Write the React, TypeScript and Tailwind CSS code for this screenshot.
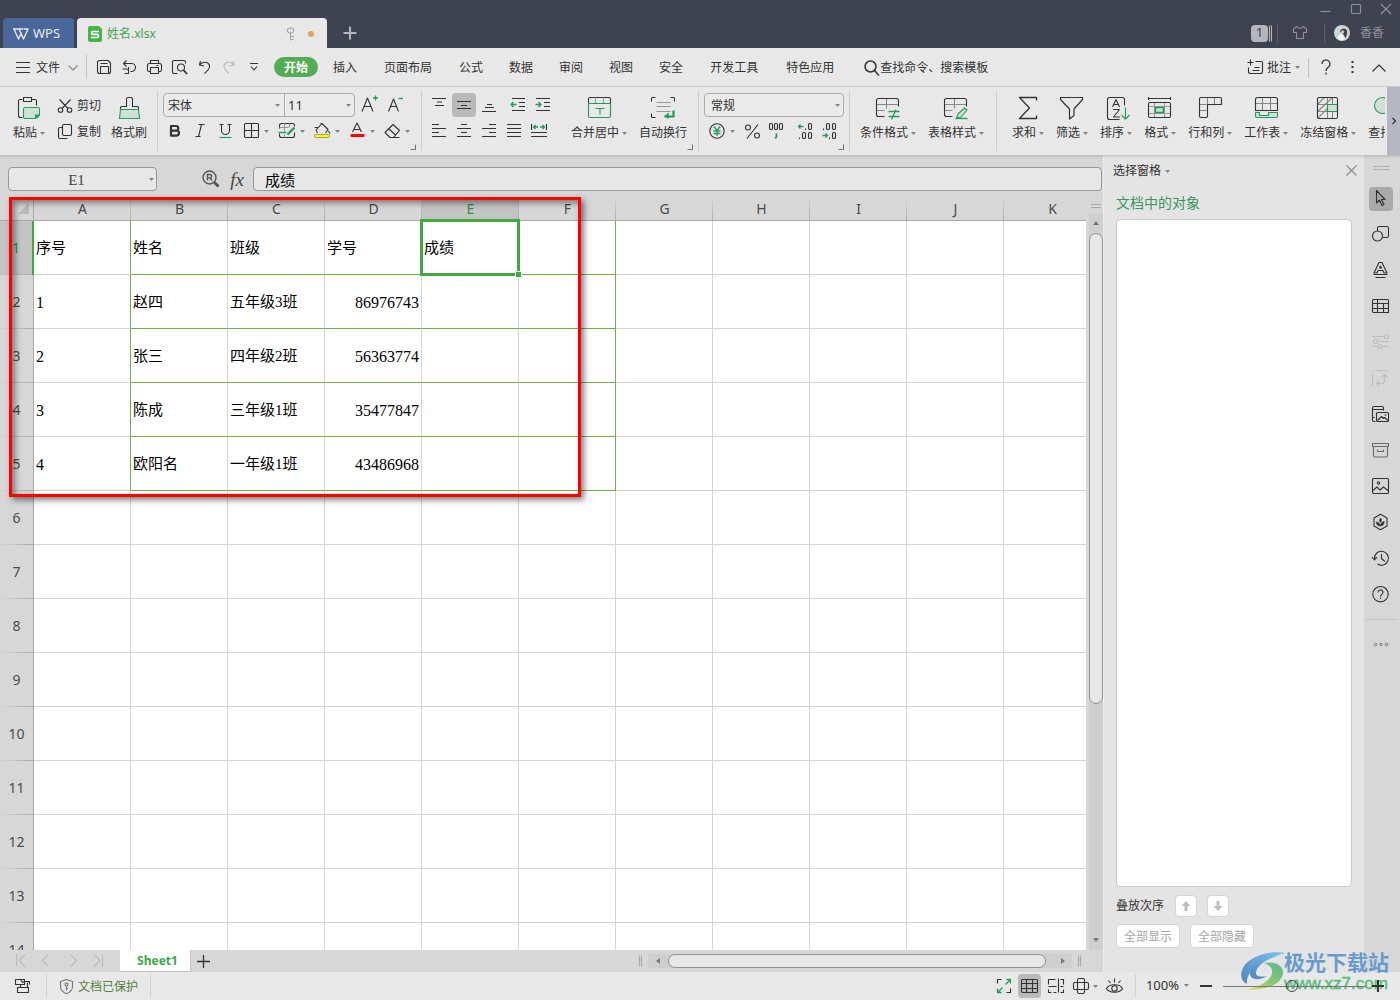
import React from "react";

type Kids = { children?: React.ReactNode };

function Ic({ w, h, sw = 1.1, className = "", children }: Kids & { w: number; h: number; sw?: number; className?: string }) {
  return (
    <svg width={w} height={h} viewBox={`0.5 0.5 ${w} ${h}`} fill="none" stroke="currentColor" strokeWidth={sw} strokeLinejoin="round" className={"shrink-0 overflow-visible " + className} aria-hidden="true">
      {children}
    </svg>
  );
}

const G = "#279b5b";
const LG = "#cfe0d6";

function Caret({ className = "" }: { className?: string }) {
  return (
    <svg width="5" height="3" viewBox="0 0 5 3" className={"shrink-0 " + className} aria-hidden="true">
      <path d="M0 0h5L2.500 3z" fill="#858585" />
    </svg>
  );
}

function Corner() {
  return (
    <Ic w={6} h={6} className="absolute bottom-1 right-1 text-[#777]">
      <path d="M5 0v5H0" />
    </Ic>
  );
}

function Big({ label, icon, caret = true }: { label: string; icon: React.ReactNode; caret?: boolean }) {
  return (
    <button className="flex shrink-0 flex-col items-center gap-1 pt-[9px]">
      <span className="flex h-6 items-center justify-center">{icon}</span>
      <span className="flex h-[18px] items-center gap-[3px] whitespace-nowrap">
        {label}
        {caret && <Caret />}
      </span>
    </button>
  );
}

function Tool({ label, active, children }: Kids & { label: string; active?: boolean }) {
  return (
    <button aria-label={label} className={"flex h-6 w-6 shrink-0 items-center justify-center rounded " + (active ? "bg-[#bababa]" : "")}>
      {children}
    </button>
  );
}

function Drop({ label, children }: Kids & { label: string }) {
  return (
    <button aria-label={label} className="flex h-6 w-[35px] shrink-0 items-center gap-1">
      {children}
      <Caret />
    </button>
  );
}

/* ---------- title bar ---------- */
function TitleBar() {
  return (
    <header className="flex h-12 shrink-0 items-end bg-[#3f424f] pl-[3px] text-[#8f929d]">
      <button className="flex h-[30px] w-[71px] items-center gap-1 rounded-t bg-[#4a6799] pl-[10px] pt-[2px] text-[13px] text-[#e6e9f0]">
        <Ic w={16} h={12} sw={1.400}>
          <path d="M.5 1.500h5M1.500 1.500l4.500 10L9 5M4.500 1.500h6M6.500 1.500l4.500 10L15.500 1.500H11" />
        </Ic>
        WPS
      </button>
      <div className="ml-[3px] flex h-[30px] w-[250px] items-center rounded-t bg-[#e8e8e8] pl-[11px] pr-[13px] pt-[2px] text-xs text-[#3fa64a]">
        <svg width="14" height="16" viewBox="0 0 14 16" fill="none" className="shrink-0" aria-hidden="true">
          <path d="M2 0h9l3 3v11a2 2 0 0 1-2 2H2a2 2 0 0 1-2-2V2a2 2 0 0 1 2-2z" fill="#45b549" />
          <path d="M11 5.500H5a1.400 1.400 0 0 0 0 2.900h4a1.500 1.500 0 0 1 0 3.100H3" stroke="#fff" strokeWidth="1.600" />
        </svg>
        <span className="ml-[5px] flex-1">姓名.xlsx</span>
        <Ic w={9} h={13} className="text-[#a3a3a3]">
          <ellipse cx="4" cy="3" rx="3.200" ry="2.500" />
          <path d="M4 5.500V13M4 9h3.500M4 12h3.500" />
        </Ic>
        <span className="ml-[12px] h-[6px] w-[6px] rounded-full bg-[#e8a05a]" />
      </div>
      <button aria-label="新建标签" className="ml-[17px] flex h-[30px] w-3 items-center text-[#b4b6bd]">
        <Ic w={12} h={12} sw={2}><path d="M6.500 0v13M0 6.500h13" /></Ic>
      </button>
      <div className="ml-auto flex h-12 flex-col items-end">
        <div className="flex h-[18px] items-center gap-5 pr-[9px]">
          <button aria-label="最小化"><Ic w={10} h={10}><path d="M0 8h10" /></Ic></button>
          <button aria-label="最大化"><Ic w={10} h={10}><rect x="1" y="1" width="9" height="9" rx="1" /></Ic></button>
          <button aria-label="关闭"><Ic w={10} h={10}><path d="M.5.500l10 10M10.500.500l-10 10" /></Ic></button>
        </div>
        <div className="flex h-[30px] items-center pr-4 text-xs">
          <span className="flex h-[17px] w-[17px] items-center justify-center rounded-sm bg-[#b4b6bc] text-[13px] text-[#2f4a70]">1</span>
          <Ic w={5} h={17}><path d="M2 1v16M4 1v16" stroke="#b4b6bc" /></Ic>
          <span className="ml-1 h-5 w-px bg-[#5b5e6a]" />
          <Ic w={14} h={14} className="ml-[15px]">
            <path d="M4.500 1L1 3.200V7h3v6h7V7h3V3.200L10.500 1C9 3.500 6 3.500 4.500 1z" />
          </Ic>
          <span className="ml-[17px] h-5 w-px bg-[#5b5e6a]" />
          <svg width="16" height="16" viewBox="0 0 16 16" className="ml-[9px]" role="img" aria-label="头像">
            <circle cx="8" cy="8" r="8" fill="#c9d6db" />
            <path d="M6 6.500c1-3.500 6-4.500 7-.5.500 3-.500 5-1.500 7L9.500 9.500z" fill="#4a3d40" />
            <path d="M7 7c.500-1.800 3-2 3.200-.5s-1.200 2.500-2.700 2z" fill="#e8c6ba" />
            <path d="M3 13c1-3 4-4.500 6-3.500l1 5C7.500 16 5 15 3 13z" fill="#f2f5f6" />
          </svg>
          <span className="ml-[10px]">香香</span>
        </div>
      </div>
    </header>
  );
}

/* ---------- menu row ---------- */
const tabs: [string, string][] = [
  ["插入", "px-[13px]"], ["页面布局", "px-[14px]"], ["公式", "px-[13px]"], ["数据", "px-[13px]"], ["审阅", "px-[13px]"],
  ["视图", "px-[13px]"], ["安全", "px-[13px]"], ["开发工具", "px-[14px]"], ["特色应用", "px-[14px]"],
];

function MenuRow() {
  return (
    <nav className="flex h-[39px] shrink-0 items-center border-b border-[#d2d2d2] bg-[#e8e8e8]">
      <button className="ml-4 flex items-center pt-px">
        <Ic w={14} h={11}><path d="M.5 1h14M.5 6h14M.5 11h14" /></Ic>
        <span className="ml-[6px]">文件</span>
        <Ic w={10} h={6} className="ml-2 text-[#888]"><path d="M1 1l4.500 4.500L10 1" /></Ic>
      </button>
      <span className="ml-2 h-6 w-px bg-[#c3c3c3]" />
      <div className="ml-[10px] flex items-center gap-[10px]">
        <button aria-label="保存"><Ic w={15} h={15}><path d="M3 1h8.500L14 3.500V12a2 2 0 0 1-2 2H3a2 2 0 0 1-2-2V3a2 2 0 0 1 2-2zM4 14V7h8v7M4 4h7" /></Ic></button>
        <button aria-label="输出"><Ic w={15} h={15}><path d="M2 4h8a4 4 0 0 1 0 8H9M5 1L2 4l3 3M1 9.500h4a2 2 0 0 1 2 2V14H3M7 12V7.500" /></Ic></button>
        <button aria-label="打印"><Ic w={15} h={15}><path d="M4 4V1h8v3M4 12H2.500A1.500 1.500 0 0 1 1 10.500V6a2 2 0 0 1 2-2h10a2 2 0 0 1 2 2v4.500a1.500 1.500 0 0 1-1.500 1.500H12M4 8h8v6H4zM10 6h2" /></Ic></button>
        <button aria-label="打印预览"><Ic w={16} h={15}><path d="M6 14H2.500A1.500 1.500 0 0 1 1 12.500v-10A1.500 1.500 0 0 1 2.500 1h10A1.500 1.500 0 0 1 14 2.500V4" /><circle cx="9.500" cy="8" r="3.500" /><path d="M12 10.500l3.500 4" strokeWidth="1.800" /></Ic></button>
        <button aria-label="撤销"><Ic w={14} h={15}><path d="M3 1.500L2 5.500l4.500 1M2 5.500C5 1.500 11 2 12 6c.8 3.500-2.500 5.500-5 8" /></Ic></button>
        <button aria-label="恢复" className="text-[#b9b9b9]"><Ic w={14} h={15}><path d="M11.500 1.500l1 4-4.500 1M12.500 5.500C9.500 1.500 3.500 2 2.500 6c-.8 3.500 2.500 5.500 5 8" /></Ic></button>
        <button aria-label="更多" className="ml-1"><Ic w={8} h={8}><path d="M.5 1h8M1.500 4l3 3.500 3-3.500" /></Ic></button>
      </div>
      <button className="ml-4 flex h-5 w-11 shrink-0 items-center justify-center rounded-full bg-[#53ad57] pt-px font-bold text-white">开始</button>
      <div className="ml-[2px] flex shrink-0 pt-[2px]">
        {tabs.map(([t, p]) => <button key={t} className={p}>{t}</button>)}
      </div>
      <button className="ml-4 flex shrink-0 items-center pt-px">
        <Ic w={16} h={16} sw={1.500}><circle cx="7" cy="7" r="5.500" /><path d="M11 11l4.500 5" /></Ic>
        查找命令、搜索模板
      </button>
      <div className="ml-auto flex shrink-0 items-center pr-[14px] pt-px">
        <button className="flex items-center">
          <Ic w={16} h={15}><path d="M3 0v6M0 3h6M8 2h5.500A1.500 1.500 0 0 1 15 3.500V12a2 2 0 0 1-2 2H3a2 2 0 0 1-2-2V8M5 11h7M7 8h5" /></Ic>
          <span className="ml-[3px]">批注</span>
          <Caret className="ml-1" />
        </button>
        <span className="ml-2 h-5 w-px bg-[#c3c3c3]" />
        <button aria-label="帮助" className="ml-3"><Ic w={10} h={15} sw={1.300}><path d="M1.500 4.500a4 4 0 1 1 6.500 3C6 9 5.500 9.500 5.500 11.500M5.500 13v2" /></Ic></button>
        <button aria-label="选项" className="ml-5"><Ic w={3} h={13}><path d="M1 1.500h2M1 6.500h2M1 11.500h2" strokeWidth="2" /></Ic></button>
        <button aria-label="收起功能区" className="ml-[18px]"><Ic w={14} h={8}><path d="M1 8l6.500-6.500L14 8" /></Ic></button>
      </div>
    </nav>
  );
}

/* ---------- ribbon ---------- */
const cellGrid = (
  <>
    <path d="M1 8h22M1 14h8M11 2v10" stroke="#8b8b8b" />
    <path d="M9 20H3a2 2 0 0 1-2-2V4a2 2 0 0 1 2-2h18a2 2 0 0 1 2 2v6" />
  </>
);

function Ribbon() {
  return (
    <section aria-label="开始" className="relative z-10 flex h-[68px] shrink-0 overflow-hidden bg-[#e8e8e8] shadow-[0_1px_3px_rgba(0,0,0,0.18)]">
      <div className="flex shrink-0 pl-[13px] pr-[10px]">
        <Big label="粘贴" icon={
          <Ic w={23} h={23}>
            <path d="M5 21H3a2 2 0 0 1-2-2V4.500A1.500 1.500 0 0 1 2.500 3H5M14 3h3.500A1.500 1.500 0 0 1 19 4.500V9M6 1h8v4H6z" />
            <path d="M6 12.500A1.500 1.500 0 0 1 7.500 11h13A1.500 1.500 0 0 1 22 12.500v6L18 22H7.500A1.500 1.500 0 0 1 6 20.500z" fill={LG} stroke={G} />
            <path d="M22 18.500h-4V22z" fill={G} stroke={G} />
          </Ic>} />
        <div className="ml-[13px] flex flex-col gap-[2px] pt-[6px]">
          <button className="flex h-6 items-center gap-[5px] pt-px">
            <Ic w={14} h={14}><circle cx="3" cy="11.500" r="2.300" /><circle cx="12" cy="11.500" r="2.300" /><path d="M2 1l8.500 9M13 1L4.500 10" /></Ic>剪切
          </button>
          <button className="flex h-6 items-center gap-[5px] pt-px">
            <Ic w={14} h={15}><rect x="5" y="1" width="9" height="11" rx="1.500" /><path d="M5 4H2.500A1.500 1.500 0 0 0 1 5.500v8A1.500 1.500 0 0 0 2.500 15H10" /></Ic>复制
          </button>
        </div>
        <div className="ml-[10px] flex">
          <Big caret={false} label="格式刷" icon={
            <Ic w={21} h={23}>
              <path d="M2 13v-2a1 1 0 0 1 1-1h5V2.500A1.500 1.500 0 0 1 9.500 1h3A1.500 1.500 0 0 1 14 2.500V10h5a1 1 0 0 1 1 1v2" />
              <path d="M2 13h18l1 9H1z" fill={LG} stroke={G} />
            </Ic>} />
        </div>
      </div>
      <span className="my-1 w-px shrink-0 bg-[#cfcfcf]" />

      <div className="relative flex w-[263px] shrink-0 flex-col gap-[2px] pl-[5px] pt-[6px]">
        <div className="flex items-center">
          <div className="flex h-6 rounded border border-[#adadad] bg-[#ebebeb]">
            <label className="relative flex items-center border-r border-[#adadad]">
              <select aria-label="字体" className="h-[22px] w-[120px] appearance-none bg-transparent pl-1 pt-px outline-none"><option>宋体</option></select>
              <Caret className="absolute right-1" />
            </label>
            <label className="relative flex items-center">
              <select aria-label="字号" className="h-[22px] w-[69px] appearance-none bg-transparent pl-[3px] pt-px text-[13px] outline-none"><option>11</option></select>
              <Caret className="absolute right-[3px]" />
            </label>
          </div>
          <button aria-label="增大字号" className="ml-[6px]"><Ic w={18} h={18}><path d="M1.500 16L7 2.500 12.500 16M3.500 11h7" /><path d="M15 0v5M12.500 2.500h5" stroke={G} strokeWidth="1.300" /></Ic></button>
          <button aria-label="减小字号" className="ml-[9px]"><Ic w={16} h={18}><path d="M1 16L6 3.500 11 16M3 11h6" /><path d="M11 3h4.500" stroke={G} strokeWidth="1.300" /></Ic></button>
        </div>
        <div className="flex items-center gap-px">
          <Tool label="加粗"><Ic w={12} h={12} sw={2.200}><path d="M2.500 1.500h5a2.300 2.300 0 0 1 0 4.600h-5zM2.500 6.100H8a2.500 2.500 0 0 1 0 5H2.500z" /></Ic></Tool>
          <Tool label="倾斜"><Ic w={11} h={14}><path d="M4 1h6M1 13h5M7 1L4 13" /></Ic></Tool>
          <Tool label="下划线"><Ic w={13} h={15}><path d="M3 1v6a4 4 0 0 0 8 0V1M1 1h4M9 1h4" /><path d="M1 14h12" stroke={G} /></Ic></Tool>
          <div className="ml-[6px] flex">
            <Drop label="边框"><Ic w={16} h={16}><rect x="1" y="1" width="14" height="14" rx="1" /><path d="M8 1v14M1 8h14" /></Ic></Drop>
            <Drop label="填充样式"><Ic w={17} h={16}><path d="M16 4V3a2 2 0 0 0-2-2H3a2 2 0 0 0-2 2v3M1 11v2a2 2 0 0 0 2 2h11a2 2 0 0 0 2-2v-3" /><path d="M6 1v8M11 1v4M1 5h9M6 12v3" stroke="#999" /><path d="M0 10h8" stroke={G} strokeWidth="1.400" /><path d="M16 5l-7 7" stroke={G} strokeWidth="2.400" /></Ic></Drop>
            <Drop label="填充颜色"><Ic w={17} h={16}><path d="M4 10.500L2.500 7.500 8.500 1l6 6L12 10.500M1 5h4M15 8.500l1.500 2.500M7 1h2" /><rect x="1" y="12" width="15" height="3" rx="1" fill="#ff0" stroke="#8a8a5a" strokeWidth=".8" /></Ic></Drop>
            <Drop label="字体颜色"><Ic w={17} h={16}><path d="M4 9.500L8.500.500 13 9.500M5.500 7h6" /><rect x="2" y="11.500" width="14" height="3" rx="1" fill="red" stroke="none" /></Ic></Drop>
            <Drop label="清除"><Ic w={17} h={15}><path d="M9.500 1l6.500 6-6 7H6.500L1.500 9zM5 5l7 6.500M10 14h6" /></Ic></Drop>
          </div>
        </div>
        <Corner />
      </div>
      <span className="my-1 w-px shrink-0 bg-[#cfcfcf]" />

      <div className="relative flex w-[276px] shrink-0 pl-[5px]">
        <div className="flex flex-col gap-[2px] pt-[6px]">
          <div className="flex gap-px">
            <Tool label="顶端对齐"><Ic w={14} h={14}><path d="M.5 1h14M5.500 4.500h5M3.500 8h9" transform="translate(0 0)" /></Ic></Tool>
            <Tool label="垂直居中" active><Ic w={14} h={14}><path d="M.5 4h14M4.500 8h6M.5 11h14" /></Ic></Tool>
            <Tool label="底端对齐"><Ic w={14} h={14}><path d="M5.500 7h5M3.500 10h9M.5 14h14" /></Ic></Tool>
            <div className="ml-[3px] flex gap-px">
              <Tool label="减少缩进"><Ic w={15} h={14}><path d="M2.500 1h13M9.500 5h6M9.500 9h6M2.500 13h13" /><path d="M7 7H1.500M4 4.500L1.500 7 4 9.500" stroke={G} strokeWidth="1.400" /></Ic></Tool>
              <Tool label="增加缩进"><Ic w={15} h={14}><path d="M1.500 1h14M9.500 5h6M9.500 9h6M1.500 13h14" /><path d="M1 7h5.500M4 4.500L6.500 7 4 9.500" stroke={G} strokeWidth="1.400" /></Ic></Tool>
            </div>
          </div>
          <div className="flex gap-px">
            <Tool label="左对齐"><Ic w={14} h={14}><path d="M.5 1h7M.5 5h14M.5 9h7M.5 13h14" /></Ic></Tool>
            <Tool label="水平居中"><Ic w={14} h={14}><path d="M4.500 1h6M.5 5h14M4.500 9h6M.5 13h14" /></Ic></Tool>
            <Tool label="右对齐"><Ic w={14} h={14}><path d="M7.500 1h7M.5 5h14M7.500 9h7M.5 13h14" /></Ic></Tool>
            <Tool label="两端对齐"><Ic w={14} h={14}><path d="M.5 1h14M.5 5h14M.5 9h14M.5 13h14" /></Ic></Tool>
            <Tool label="分散对齐"><Ic w={16} h={14}><path d="M1 .5v6M16 .5v6M.5 9h16M.5 13h16" /><path d="M7.500 3.500H3M5 1.500l-2 2 2 2M9.500 3.500H14M12 1.500l2 2-2 2" stroke={G} strokeWidth="1.400" /></Ic></Tool>
          </div>
        </div>
        <div className="ml-[17px] flex gap-3">
          <Big label="合并居中" icon={
            <Ic w={23} h={22}>
              <path d="M1 7V2.500A1.500 1.500 0 0 1 2.500 1h19A1.500 1.500 0 0 1 23 2.500V7" />
              <path d="M8 1v6M16 1v6" stroke="#999" />
              <path d="M1 7h22v12.500a1.500 1.500 0 0 1-1.500 1.500h-19A1.500 1.500 0 0 1 1 19.500zM8 12h9M12.500 12v6" stroke={G} />
            </Ic>} />
          <Big caret={false} label="自动换行" icon={
            <Ic w={24} h={22}>
              <path d="M1 5V2a1 1 0 0 1 1-1h3M20 1h3a1 1 0 0 1 1 1v3M1 17v3a1 1 0 0 0 1 1h3" />
              <path d="M6 6h14M6 10h14M6 15h14" stroke="#999" />
              <path d="M23 14v6h-6" stroke={G} strokeWidth="2.200" />
              <path d="M18 16.500v5.500L13.500 20z" fill={G} stroke={G} strokeWidth=".5" />
            </Ic>} />
        </div>
        <Corner />
      </div>
      <span className="my-1 w-px shrink-0 bg-[#cfcfcf]" />

      <div className="relative flex w-[150px] shrink-0 flex-col gap-[2px] pl-[5px] pt-[6px]">
        <label className="relative flex h-6 w-[140px] items-center rounded border border-[#adadad] bg-[#ebebeb]">
          <select aria-label="数字格式" className="h-[22px] w-full appearance-none bg-transparent pl-[6px] pt-px outline-none"><option>常规</option></select>
          <Caret className="absolute right-[3px]" />
        </label>
        <div className="flex h-6 items-center pl-[5px]">
          <button aria-label="货币" className="flex items-center gap-[5px]"><Ic w={16} h={16}><circle cx="8.500" cy="8.500" r="7.200" /><path d="M5.500 4l3 4 3-4M5 8.500h7M5 11h7M8.500 8v5.500" stroke={G} strokeWidth="1.300" /></Ic><Caret /></button>
          <button aria-label="百分比" className="ml-[10px]"><Ic w={15} h={15}><circle cx="3.500" cy="4" r="2.500" /><circle cx="12.500" cy="12" r="2.500" /><path d="M13.500 1l-11 14" /></Ic></button>
          <button aria-label="千位分隔" className="ml-[9px]"><Ic w={16} h={17}><rect x="1" y="1" width="3" height="6" rx="1.300" /><rect x="6" y="1" width="3" height="6" rx="1.300" /><rect x="11" y="1" width="3" height="6" rx="1.300" /><path d="M8 11v3l-1.200 2" stroke={G} strokeWidth="1.800" /></Ic></button>
          <button aria-label="增加小数位" className="ml-[13px]"><Ic w={15} h={17}><rect x="11" y="1" width="3" height="6" rx="1.300" /><rect x="5" y="10" width="3" height="6" rx="1.300" /><rect x="11" y="10" width="3" height="6" rx="1.300" /><path d="M8 6v1.500M2 15v1.500" /><path d="M6 4H1M3 2L1 4l2 2" stroke={G} strokeWidth="1.400" /></Ic></button>
          <button aria-label="减少小数位" className="ml-[9px]"><Ic w={15} h={17}><rect x="5" y="1" width="3" height="6" rx="1.300" /><rect x="11" y="1" width="3" height="6" rx="1.300" /><rect x="11" y="10" width="3" height="6" rx="1.300" /><path d="M2 6v1.500M8 15v1.500" /><path d="M1 13h5M4 11l2 2-2 2" stroke={G} strokeWidth="1.400" /></Ic></button>
        </div>
        <Corner />
      </div>
      <span className="my-1 w-px shrink-0 bg-[#cfcfcf]" />

      <div className="flex shrink-0 gap-3 pl-[10px] pr-3">
        <Big label="条件格式" icon={<Ic w={24} h={23}>{cellGrid}<path d="M13 15h11M13 20h11M20.500 13L16 23" stroke={G} strokeWidth="1.300" /></Ic>} />
        <Big label="表格样式" icon={<Ic w={24} h={23}>{cellGrid}<path d="M13 21.500l1.500-4L21 11.500l2.500 2-6 7z" fill={LG} stroke={G} /><path d="M12 22h12" stroke={G} strokeWidth="1.300" /></Ic>} />
      </div>
      <span className="my-1 w-px shrink-0 bg-[#cfcfcf]" />

      <div className="flex min-w-0 flex-1 gap-3 overflow-hidden pl-[15px]">
        <Big label="求和" icon={<Ic w={20} h={23} sw={1.300}><path d="M19 4V1H2l10 10.500L2 22h17v-3" /></Ic>} />
        <Big label="筛选" icon={<Ic w={24} h={23} sw={1.200}><path d="M1 1h22v2l-8.500 9.500V19L10 22.500v-10L1 3z" /></Ic>} />
        <Big label="排序" icon={<Ic w={23} h={23} className="ml-1"><path d="M13 23H3a2 2 0 0 1-2-2V3a2 2 0 0 1 2-2h13a2 2 0 0 1 2 2v6" /><path d="M6 10.500L9.500 3l3.500 7.500M7.500 8h4M6.500 13H13l-6 7.500h6.500" /><path d="M19 11v11M15 18.500l4 4 4-4" stroke={G} /></Ic>} />
        <Big label="格式" icon={<Ic w={24} h={22}><path d="M1 2h22M1 .5v3M23 .5v3" /><path d="M1 10h22M1 17h22M7 6v15M17 6v15" stroke="#999" /><rect x="1" y="6" width="22" height="15" rx="1.500" /><rect x="8" y="11" width="8" height="5" fill={LG} stroke={G} strokeWidth="1.500" /></Ic>} />
        <Big label="行和列" icon={<Ic w={23} h={22}><path d="M9 1v7M16 1v7M1 8h7M1 14h7" stroke="#888" /><path d="M2.500 1h19A1.500 1.500 0 0 1 23 2.500V8H9v11.500A1.500 1.500 0 0 1 7.500 21h-5A1.500 1.500 0 0 1 1 19.500v-17A1.500 1.500 0 0 1 2.500 1z" /></Ic>} />
        <Big label="工作表" icon={<Ic w={23} h={22}><path d="M8 1v13M16 1v13M1 7h22" stroke="#888" /><path d="M1 14V3a2 2 0 0 1 2-2h18a2 2 0 0 1 2 2v11z" /><path d="M1 16h4v3h9v-3h9v3.500a1.500 1.500 0 0 1-1.500 1.500h-19A1.500 1.500 0 0 1 1 19.500z" fill={LG} stroke={G} /></Ic>} />
        <Big label="冻结窗格" icon={<Ic w={22} h={23}><path d="M1 8h20M1 15h10M11 1v21M16 1v7M16 15v7M1 8l7-7M1 15L16 1M1 22L11 12" stroke="#888" /><rect x="11" y="8" width="10" height="7" fill={LG} stroke={G} /><rect x="1" y="1" width="20" height="21" rx="1.500" /></Ic>} />
        <Big label="查找" icon={<Ic w={22} h={22} className="text-[#279b5b]"><circle cx="10" cy="9" r="8" fill={LG} /><path d="M15 15l6 6" /></Ic>} />
      </div>
      <button aria-label="向右滚动" className="ml-[2px] flex w-[13px] shrink-0 items-center justify-center bg-[#b5b8c2]">
        <Ic w={4} h={6}><path d="M1 .500L4 3.500l-3 3" /></Ic>
      </button>
    </section>
  );
}

/* ---------- sheet ---------- */
const columns = ["A", "B", "C", "D", "E", "F", "G", "H", "I", "J", "K"];
const rows: string[][] = [
  ["序号", "姓名", "班级", "学号", "成绩"],
  ["1", "赵四", "五年级3班", "86976743"],
  ["2", "张三", "四年级2班", "56363774"],
  ["3", "陈成", "三年级1班", "35477847"],
  ["4", "欧阳名", "一年级1班", "43486968"],
];

function Sheet() {
  return (
    <div className="min-w-0 flex-1 overflow-hidden">
      <table className="w-[1101px] table-fixed border-separate border-spacing-0 bg-white font-['Noto_Sans','Noto_Sans_CJK_SC',sans-serif] text-sm">
        <colgroup>
          <col className="w-[34px]" />
          {columns.map((c) => <col key={c} className="w-[97px]" />)}
        </colgroup>
        <thead>
          <tr>
            <th aria-label="全选" className="h-6 border-b border-r border-[#a9a9a9] bg-[#d7d7d7] p-0">
              <svg width="11" height="11" viewBox="0 0 11 11" className="ml-[18px]" aria-hidden="true"><path d="M11 0v11H0z" fill="#b9b9b9" /></svg>
            </th>
            {columns.map((c) => (
              <th key={c} scope="col" className={"h-6 border-b border-[#a9a9a9] bg-[linear-gradient(180deg,transparent,#a9a9a9)] bg-[length:1px_100%] bg-right bg-no-repeat p-0 pt-px font-normal " + (c === "E" ? "bg-[#c4c4c4] text-[#2f8f4e]" : "bg-[#d7d7d7] text-[#4a4a4a]")}>{c}</th>
            ))}
          </tr>
        </thead>
        <tbody>
          {Array.from({ length: 14 }, (_, r) => (
            <tr key={r}>
              <th scope="row" className={"h-[54px] bg-[linear-gradient(90deg,transparent,#a9a9a9)] bg-[length:100%_1px] bg-bottom bg-no-repeat p-0 font-normal " + (r === 0 ? "border-r-2 border-[#43a843] bg-[#c4c4c4] text-[#2f8f4e]" : "border-r border-[#a9a9a9] bg-[#d7d7d7] text-[#4a4a4a]")}>{r + 1}</th>
              {columns.map((c, i) => {
                const text = rows[r]?.[i] ?? "";
                const data = r < 5;
                const right = data && (i === 0 || i === 5) ? "border-r-[#70ad47]" : "border-r-[#d4d4d4]";
                const bottom = data && i > 0 && i < 6 ? "border-b-[#70ad47]" : "border-b-[#d4d4d4]";
                const numeric = /^\d+$/.test(text);
                return (
                  <td key={c} className={`relative border-b border-r p-0 pt-[3px] font-['Liberation_Serif','Noto_Sans_CJK_SC',serif] text-black ${right} ${bottom} ${numeric ? "text-base" : "text-[15px]"} ${text.length > 5 && numeric ? "pr-[2px] text-right" : "pl-[2px]"}`}>
                    {text}
                    {r === 0 && c === "E" && (
                      <span className="absolute -inset-[2px] z-10 border-[3px] border-[#43a843]">
                        <span className="absolute -bottom-[5px] -right-[5px] h-[7px] w-[7px] border border-white bg-[#43a843]" />
                      </span>
                    )}
                  </td>
                );
              })}
            </tr>
          ))}
        </tbody>
      </table>
    </div>
  );
}

function SheetArea() {
  return (
    <main className="relative flex min-w-0 flex-1 flex-col bg-[#d7d7d7]">
      <div className="flex h-[42px] shrink-0 items-center pb-[6px] pl-2 pr-px pt-3">
        <div className="relative flex h-6 w-[149px] items-center">
          <input aria-label="名称框" defaultValue="E1" className="h-6 w-full rounded border border-[#999] bg-[#e7e7e7] pr-3 pt-[2px] text-center font-['Liberation_Serif',serif] text-[15px] text-[#444] outline-none" />
          <Caret className="absolute right-[3px]" />
        </div>
        <button aria-label="查找函数" className="ml-[45px] text-[#555]"><Ic w={18} h={18} sw={1.400}><circle cx="8" cy="8" r="6.500" /><path d="M6 11V5h2.500a1.700 1.700 0 0 1 0 3.400H6M8.500 8.400l2 2.600" /><path d="M12.500 12.500l4.500 4.500" strokeWidth="2.800" /></Ic></button>
        <button aria-label="插入函数" className="ml-[9px] w-4 font-['Liberation_Serif',serif] text-[19px] italic leading-none text-[#444]">fx</button>
        <input aria-label="编辑栏" defaultValue="成绩" className="ml-2 h-6 min-w-0 flex-1 rounded border border-[#999] bg-[#e7e7e7] pl-[11px] text-[15px] text-black outline-none" />
      </div>
      <div className="flex min-h-0 flex-1">
        <Sheet />
        <div className="ml-[3px] flex w-[14px] shrink-0 flex-col items-center">
          <Ic w={10} h={16} className="text-[#a9a9a9]"><path d="M.5 8h10M.5 11h10" /></Ic>
          <div className="flex w-full flex-1 flex-col items-center bg-[#cfcfcf]">
            <button aria-label="向上滚动" className="flex h-5 items-center"><svg width="6" height="4" viewBox="0 0 6 4"><path d="M0 4h6L3 0z" fill="#777" /></svg></button>
            <span className="h-[471px] w-full rounded-full border border-[#929292] bg-[#e7e7e7]" />
            <button aria-label="向下滚动" className="mt-auto flex h-5 items-center"><svg width="6" height="4" viewBox="0 0 6 4"><path d="M0 0h6L3 4z" fill="#777" /></svg></button>
          </div>
        </div>
      </div>
      <div className="flex h-[22px] shrink-0 items-center">
        <div className="flex w-[120px] items-center gap-4 pl-4 text-[#bdbdbd]">
          <button aria-label="第一张"><Ic w={10} h={12}><path d="M1 0v12M9.500 0L3.500 6l6 6" /></Ic></button>
          <button aria-label="上一张"><Ic w={8} h={12}><path d="M7 0L1 6l6 6" /></Ic></button>
          <button aria-label="下一张" className="ml-1"><Ic w={8} h={12}><path d="M1 0l6 6-6 6" /></Ic></button>
          <button aria-label="最后一张"><Ic w={10} h={12}><path d="M9 0v12M.5 0l6 6-6 6" /></Ic></button>
        </div>
        <button className="h-[22px] w-[71px] border-b border-r border-[#c4c4c4] bg-white pl-[5px] pt-px font-bold text-[#3fa64a]">Sheet1</button>
        <button aria-label="新建工作表" className="ml-[6px]"><Ic w={13} h={13} sw={1.300}><path d="M7 .5v13M.5 7h13" /></Ic></button>
        <div className="ml-auto flex items-center text-[#a9a9a9]">
          <Ic w={3} h={10}><path d="M1 0v11M3 0v11" /></Ic>
          <div className="mx-[6px] flex h-[14px] w-[424px] items-center bg-[#cfcfcf]">
            <button aria-label="向左滚动" className="flex w-5 justify-center"><svg width="4" height="6" viewBox="0 0 4 6"><path d="M4 0v6L0 3z" fill="#777" /></svg></button>
            <span className="h-full flex-1 rounded-full border border-[#929292] bg-[#e7e7e7]" />
            <button aria-label="向右滚动工作表" className="flex w-[26px] justify-center pl-2"><svg width="4" height="6" viewBox="0 0 4 6"><path d="M0 0v6l4-3z" fill="#777" /></svg></button>
          </div>
          <Ic w={3} h={10} className="mr-[22px]"><path d="M1 0v11M3 0v11" /></Ic>
        </div>
      </div>
      <div className="pointer-events-none absolute left-[9px] top-[42px] z-20 h-[300px] w-[572px] border-[3px] border-[#fe0000] shadow-[3px_3px_6px_rgba(0,0,0,0.5),inset_3px_3px_6px_rgba(0,0,0,0.45)]" />
    </main>
  );
}

/* ---------- selection pane ---------- */
function SelectionPane() {
  return (
    <aside className="flex w-[261px] shrink-0 flex-col border-l border-[#ececec] bg-[#e4e4e4] px-3">
      <div className="flex h-8 shrink-0 items-center justify-between">
        <button className="-ml-[3px] flex items-center gap-1">选择窗格<Caret /></button>
        <button aria-label="关闭窗格" className="-mr-[5px] text-[#888]"><Ic w={10} h={10}><path d="M0 0l10 10M10 0L0 10" /></Ic></button>
      </div>
      <h2 className="flex h-8 shrink-0 items-center text-sm text-[#3a9560]">文档中的对象</h2>
      <div className="flex-1 rounded-sm border border-[#c9c9c9] bg-white" />
      <div className="mt-2 flex shrink-0 items-center">
        叠放次序
        <button aria-label="上移" className="ml-[11px] flex h-[22px] w-[22px] items-center justify-center rounded-sm border border-[#d6d6d6] bg-white"><svg width="10" height="10" viewBox="0 0 10 10"><path d="M5 0l4.500 5H6.500v5h-3V5H.5z" fill="#bdbdbd" /></svg></button>
        <button aria-label="下移" className="ml-[10px] flex h-[22px] w-[22px] items-center justify-center rounded-sm border border-[#d6d6d6] bg-white"><svg width="10" height="10" viewBox="0 0 10 10"><path d="M5 10l4.500-5H6.500V0h-3v5H.5z" fill="#bdbdbd" /></svg></button>
      </div>
      <div className="mb-6 mt-[7px] flex shrink-0 gap-[10px] text-[#a5a5a5]">
        <button className="h-6 w-16 rounded-sm border border-[#d6d6d6] bg-white pt-px">全部显示</button>
        <button className="h-6 w-16 rounded-sm border border-[#d6d6d6] bg-white pt-px">全部隐藏</button>
      </div>
    </aside>
  );
}

const side: { label: string; cls?: string; icon: React.ReactNode }[] = [
  { label: "选择", icon: <path d="M5 1v12.500l3-3 2.500 5.500 2-1-2.500-5h3.500z" /> },
  { label: "形状", icon: <><circle cx="6" cy="10.500" r="5" /><path d="M6 5.500V2.500A1.500 1.500 0 0 1 7.500 1h8A1.500 1.500 0 0 1 17 2.500v8a1.500 1.500 0 0 1-1.500 1.500H11" /></> },
  { label: "艺术字", icon: <path d="M2.500 11.500L7.500 1h3l5 10.500h-3L11.500 9h-5l-1 2.500zM8 6.500L9 4.500l1 2zM2 13h14M4 16h10" /> },
  { label: "表格", icon: <path d="M2 2h14a1 1 0 0 1 1 1v12H2a1 1 0 0 1-1-1V3a1 1 0 0 1 1-1zM1 6h16M1 11h16M6 2v13M12 6v9" /> },
  { label: "属性", cls: "text-[#bebebe]", icon: <><path d="M1 3h12M6 8h11M1 8h1M1 13h5.500M10.500 13H17" /><circle cx="15" cy="3" r="2" /><circle cx="4" cy="8" r="2" /><circle cx="8.500" cy="13" r="2" /></> },
  { label: "动画", cls: "text-[#bebebe]", icon: <path d="M1 4v12M4 1h12M5 14h5a3 3 0 0 0 3-3V5M7.500 11.500L5 14l2.500 2.500M10 8l3-3 3 3M1 1h1" /> },
  { label: "素材", icon: <><path d="M4 16H2.500A1.500 1.500 0 0 1 1 14.500v-12A1.500 1.500 0 0 1 2.500 1h8A1.500 1.500 0 0 1 12 2.500V5M1 4h11M1 12h2" /><rect x="5" y="7" width="12" height="9" rx="1" /><path d="M6 15l4-4 2 2 1-1 3.500 3M13 9.500h2" /></> },
  { label: "备份", cls: "text-[#6a6a6a]", icon: <path d="M1 2h16v3H1zM2 5h14v9a1.500 1.500 0 0 1-1.500 1.500h-11A1.500 1.500 0 0 1 2 14zM6 8v2h6V8" /> },
  { label: "图片", icon: <><rect x="1" y="1" width="16" height="15" rx="1" /><path d="M1.500 13l4-3.500 3 3L12 9.500l5 4" /><circle cx="7" cy="5.500" r="1.200" /></> },
  { label: "稻壳", icon: <><path d="M9 .800l6.500 3.700v8L9 16.200l-6.500-3.700v-8z" /><path d="M8.800 12.500c-3 0-4-2-4-4 2 0 3.500 1 4 4zc2.500 0 4-2 4-4.500-2 0-4 2-4 4.500zM8.800 9c-1.500-1.500-1-3.500.5-4.500 1 1.500 1 3-.5 4.500z" fill="currentColor" strokeWidth=".5" /></> },
  { label: "历史", icon: <path d="M3 9.500A7 7 0 1 1 6 14.500M.5 7.500L3 10.500l2.500-3M10 4.500V9l3.500 3" /> },
  { label: "帮助中心", icon: <><circle cx="9" cy="8.700" r="7.700" /><path d="M6.500 7a2.500 2.500 0 1 1 3.800 2C9.300 9.700 9 10 9 11.200M9 12.300v1.200" /></> },
];

function SideStrip() {
  return (
    <div className="flex w-9 shrink-0 flex-col items-center bg-[#d7d7d7] pr-[2px]">
      <Ic w={16} h={26} className="text-[#b0b0b0]"><path d="M.5 12h16M.5 15h16" /></Ic>
      {side.map((s, i) => (
        <button key={s.label} aria-label={s.label} className="flex h-9 w-9 items-center justify-center">
          <span className={"flex h-6 w-6 items-center justify-center rounded " + (i === 0 ? "bg-[#a9a9a9] " : "") + (s.cls ?? "")}>
            <Ic w={18} h={18}>{s.icon}</Ic>
          </span>
        </button>
      ))}
      <span className="mt-[6px] h-px w-8 bg-[#c3c3c3]" />
      <button aria-label="更多工具" className="mt-[22px]"><Ic w={14} h={5} sw={1} className="text-[#777]"><circle cx="2" cy="3" r="1.300" /><circle cx="7.500" cy="3" r="1.300" /><circle cx="13" cy="3" r="1.300" /></Ic></button>
    </div>
  );
}

/* ---------- status bar ---------- */
function StatusBar() {
  return (
    <footer className="relative z-20 flex h-7 shrink-0 items-center">
      <button aria-label="录制宏" className="ml-[15px]"><Ic w={16} h={16}><path d="M1 2h9v5H1zM6 2l2 3 2-1M10 4h5v3M13 5v5M3 10h11v5H3zM6 7v3" /></Ic></button>
      <span className="ml-[15px] h-6 w-px bg-[#d4d4d4]" />
      <button className="ml-3 flex items-center gap-1 pt-px text-[#55803f]">
        <Ic w={15} h={16} className="text-[#777]"><path d="M8 1l6 2v5c0 4-3 6-6 7.300C5 14 2 12 2 8V3z" /><circle cx="8" cy="6" r="1.500" /><path d="M8 7.500V12M8 10h1.500" /></Ic>
        文档已保护
      </button>
      <span className="ml-3 h-6 w-px bg-[#d4d4d4]" />
      <div className="ml-auto flex items-center">
        <button aria-label="全屏显示"><Ic w={16} h={16}><path d="M2 6V2h4M15 11v4h-4" /><path d="M10 7l5-5M11 2h4v4M7 10l-5 5M2 11v4h4" stroke={G} strokeWidth="1.300" /></Ic></button>
        <button aria-label="普通视图" className="ml-[6px] flex h-6 w-[23px] items-center justify-center rounded bg-[#b9b9b9]"><Ic w={17} h={16}><rect x="1" y="2" width="16" height="13" rx="1" /><path d="M1 6h16M1 11h16M6 2v13M12 2v13" /></Ic></button>
        <button aria-label="分页预览" className="ml-[7px]"><Ic w={16} h={16}><path d="M1 7V2h7M11 1v14M13 2h3v5M1 9h8M13 9h3M1 12v3h3M6 15h3M13 15h3v-3" /></Ic></button>
        <button aria-label="页面布局视图" className="ml-[9px] flex items-center gap-1"><Ic w={16} h={16}><rect x="5" y="1" width="7" height="15" rx="1.500" /><rect x="1" y="5" width="15" height="7" rx="1.500" /></Ic><Caret /></button>
        <button aria-label="护眼模式" className="ml-2"><Ic w={17} h={17}><path d="M1 11C3.500 6 14.500 6 17 11 14.500 16 3.500 16 1 11zM9 1v4M3 3l2 2.500M15 3l-2 2.500" /><circle cx="9" cy="11" r="2.700" /></Ic></button>
        <span className="ml-3 h-6 w-px bg-[#d4d4d4]" />
        <button className="ml-[10px] flex items-center gap-[5px] text-[13px]">100%<Caret /></button>
        <button aria-label="缩小" className="ml-[11px]"><Ic w={12} h={12} sw={2}><path d="M.5 6.500h12" /></Ic></button>
        <input
          type="range"
          aria-label="缩放比例"
          defaultValue={48}
          className="ml-[11px] h-3 w-[143px] appearance-none bg-[linear-gradient(#777,#777)] bg-[length:100%_1px] bg-center bg-no-repeat [&::-webkit-slider-thumb]:h-3 [&::-webkit-slider-thumb]:w-3 [&::-webkit-slider-thumb]:appearance-none [&::-webkit-slider-thumb]:rounded-full [&::-webkit-slider-thumb]:border [&::-webkit-slider-thumb]:border-[#444] [&::-webkit-slider-thumb]:bg-transparent"
        />
        <button aria-label="放大" className="ml-[6px] mr-4"><Ic w={12} h={12} sw={2}><path d="M.5 6.500h12M6.500.500v12" /></Ic></button>
      </div>
    </footer>
  );
}

function Watermark() {
  return (
    <div className="pointer-events-none absolute bottom-[6px] right-[11px] z-10 flex items-center opacity-90">
      <svg width="46" height="42" viewBox="0 0 46 42" aria-hidden="true">
        <defs>
          <linearGradient id="swooshBlue" x1="0" y1="1" x2="1" y2="0"><stop offset="0" stopColor="#4479b8" /><stop offset="1" stopColor="#6cc2ec" /></linearGradient>
          <linearGradient id="swooshGreen" x1="0" y1="1" x2="1" y2="0"><stop offset="0" stopColor="#e3d94f" /><stop offset=".5" stopColor="#7cc465" /><stop offset="1" stopColor="#4fae8a" /></linearGradient>
        </defs>
        <path d="M45 2C30-1 11 4 3 15-2 24 0 30 6 33 4 22 18 8 45 2z" fill="url(#swooshBlue)" />
        <path d="M40 4C20 7 9 16 9 23c1 6 9 7 17 2-5 1-11 1-11-3C15 15 25 8 40 4z" fill="url(#swooshBlue)" />
        <path d="M23 12c8-2 19 1 19 9 0 11-14 18-38 18 14-3 26-9 27-17 1-5-3-8-8-10z" fill="url(#swooshGreen)" />
      </svg>
      <div className="-ml-[3px] flex flex-col whitespace-nowrap">
        <span className="text-[21px] font-bold leading-6 text-[#5b95cc]">极光下载站</span>
        <span className="font-['Liberation_Sans',sans-serif] text-[17px] leading-5 text-[#4fb96f] [-webkit-text-stroke:0.5px_#4fb96f]">www.xz7.com</span>
      </div>
    </div>
  );
}

export default function App() {
  return (
    <div className="relative flex h-screen flex-col overflow-hidden bg-[#e8e8e8] font-['Noto_Sans','Noto_Sans_CJK_SC',sans-serif] text-xs text-[#333]">
      <TitleBar />
      <MenuRow />
      <Ribbon />
      <div className="flex min-h-0 flex-1">
        <SheetArea />
        <SelectionPane />
        <SideStrip />
      </div>
      <StatusBar />
      <Watermark />
    </div>
  );
}
